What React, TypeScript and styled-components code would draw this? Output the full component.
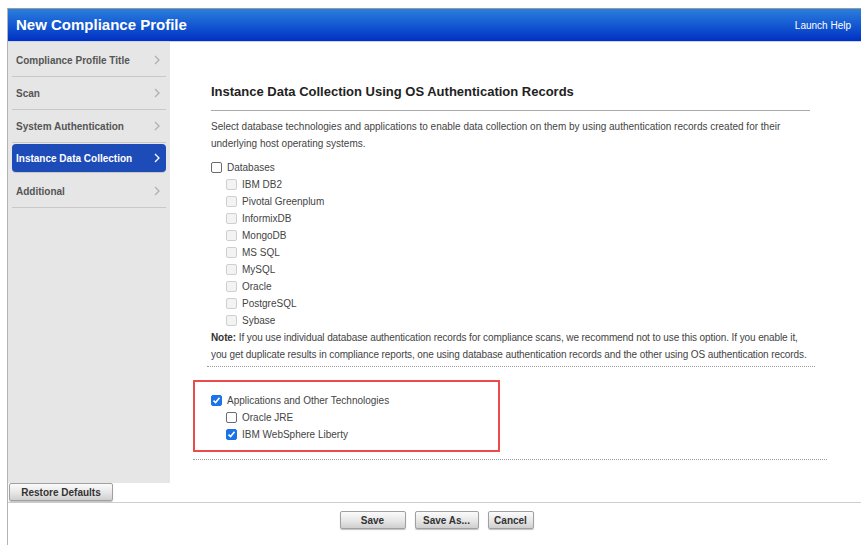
import React from 'react';
import styled, { createGlobalStyle } from 'styled-components';

const GlobalStyle = createGlobalStyle`
  html, body {
    margin: 0;
    padding: 0;
    background: #fff;
    font-family: "Liberation Sans", Arial, sans-serif;
  }
`;

const Frame = styled.div`
  margin: 8px 0 0 7px;
  border-left: 1px solid #b4b4b4;
  border-top: 1px solid #9a9a9a;
  height: 536px;
  display: flex;
  flex-direction: column;
`;

const Header = styled.div`
  height: 32px;
  background: linear-gradient(to bottom, #2c7fdc 0%, #1458d2 50%, #0030c2 100%);
  border-bottom: 1px solid #c9d4ec;
  display: flex;
  align-items: center;
  justify-content: space-between;
  padding: 0 10px 0 8px;
`;

const Title = styled.h1`
  margin: 0 0 2px;
  font-size: 15px;
  font-weight: bold;
  color: #fff;
`;

const HelpLink = styled.a`
  font-size: 10px;
  color: #fff;
  text-decoration: none;
`;

const Body = styled.div`
  display: flex;
  height: 441px;
`;

const Sidebar = styled.nav`
  width: 162px;
  background: #e6e6e6;
  padding: 2px 4px 0;
  box-sizing: border-box;
`;

const NavItem = styled.div<{ $active?: boolean }>`
  height: 32px;
  display: flex;
  align-items: center;
  justify-content: space-between;
  padding: 0 6px 0 4px;
  margin-bottom: 1px;
  box-shadow: 0 1px 0 #c8c8c8;
  font-size: 10px;
  font-weight: bold;
  color: ${(p) => (p.$active ? '#fff' : '#555')};
  background: ${(p) => (p.$active ? '#1d4bb8' : 'transparent')};
  border-radius: ${(p) => (p.$active ? '4px' : '0')};
  ${(p) => p.$active && 'height: 28px; margin: 2px 0 3px;'}
`;

const Main = styled.main`
  flex: 1;
  padding: 0 0 0 23px;
`;

const Content = styled.div`
  width: 599px;
  margin-left: 18px;
`;

const SectionTitle = styled.h2`
  margin: 42px 0 0;
  padding-bottom: 11px;
  font-size: 13px;
  font-weight: bold;
  color: #222;
  border-bottom: 1px solid #aaa;
`;

const Text = styled.p`
  margin: 7px 0 7px;
  font-size: 10px;
  line-height: 17px;
  color: #444;
`;

const NoteText = styled(Text)`
  margin: 0 0 3px;
  width: 604px;
  letter-spacing: -0.1px;
`;

const NoteLabel = styled.strong`
  font-weight: bold;
  color: #333;
`;

const OptionList = styled.div<{ $indent?: number }>`
  padding-left: ${(p) => p.$indent ?? 0}px;
`;

const Option = styled.label`
  display: flex;
  align-items: center;
  height: 17px;
  font-size: 10px;
  color: #444;
`;

const Box = styled.span<{ $checked?: boolean; $disabled?: boolean }>`
  width: 11px;
  height: 11px;
  box-sizing: border-box;
  border-radius: 2px;
  margin-right: 5px;
  display: inline-flex;
  align-items: center;
  justify-content: center;
  border: 1px solid ${(p) => (p.$checked ? '#1a73e8' : p.$disabled ? '#cfcfcf' : '#6b6b6b')};
  background: ${(p) => (p.$checked ? '#1a73e8' : p.$disabled ? '#f3f3f3' : '#fff')};
`;

const Dotted = styled.div<{ $left: number; $width: number }>`
  margin-left: ${(p) => p.$left}px;
  width: ${(p) => p.$width}px;
  border-top: 1px dotted #9a9a9a;
`;

const Highlight = styled.div`
  width: 307px;
  box-sizing: border-box;
  border: 2px solid #ea4c4c;
  margin: 13px 0 7px;
  padding: 10px 0 7px 16px;
`;

const Footer = styled.div`
  height: 19px;
  padding-left: 1px;
  border-bottom: 1px solid #cfcfcf;
  display: flex;
  align-items: flex-start;
`;

const Button = styled.button<{ $w: number }>`
  width: ${(p) => p.$w}px;
  height: 18px;
  padding: 0;
  font-family: "Liberation Sans", Arial, sans-serif;
  font-size: 10px;
  font-weight: bold;
  color: #333;
  border: 1px solid #a0a0a0;
  border-radius: 2px;
  background: linear-gradient(to bottom, #fbfbfb 0%, #e6e6e6 55%, #cfcfcf 100%);
  box-shadow: 0 1px 1px rgba(0, 0, 0, 0.25);
`;

const ActionBar = styled.div`
  display: flex;
  justify-content: center;
  gap: 9px;
  padding: 8px 0 0 4px;
`;

const Chevron = ({ color }: { color: string }) => (
  <svg width="6" height="10" viewBox="0 0 6 10">
    <polyline points="1,1 5,5 1,9" fill="none" stroke={color} strokeWidth="1.3" />
  </svg>
);

const Check = () => (
  <svg width="9" height="9" viewBox="0 0 9 9">
    <polyline points="1.5,4.6 3.6,6.6 7.5,1.8" fill="none" stroke="#fff" strokeWidth="1.6" />
  </svg>
);

const steps = [
  'Compliance Profile Title',
  'Scan',
  'System Authentication',
  'Instance Data Collection',
  'Additional',
];

const databases = [
  'IBM DB2',
  'Pivotal Greenplum',
  'InformixDB',
  'MongoDB',
  'MS SQL',
  'MySQL',
  'Oracle',
  'PostgreSQL',
  'Sybase',
];

export default function App() {
  return (
    <>
      <GlobalStyle />
      <Frame>
        <Header>
          <Title>New Compliance Profile</Title>
          <HelpLink>Launch Help</HelpLink>
        </Header>
        <Body>
          <Sidebar>
            {steps.map((s) => {
              const active = s === 'Instance Data Collection';
              return (
                <NavItem key={s} $active={active}>
                  {s}
                  <Chevron color={active ? '#fff' : '#b0b0b0'} />
                </NavItem>
              );
            })}
          </Sidebar>
          <Main>
            <Content>
              <SectionTitle>Instance Data Collection Using OS Authentication Records</SectionTitle>
              <Text>
                Select database technologies and applications to enable data collection on them by using
                authentication records created for their underlying host operating systems.
              </Text>
              <Option>
                <Box />
                Databases
              </Option>
              <OptionList $indent={15}>
                {databases.map((d) => (
                  <Option key={d}>
                    <Box $disabled />
                    {d}
                  </Option>
                ))}
              </OptionList>
              <NoteText>
                <NoteLabel>Note:</NoteLabel> If you use individual database authentication records for
                compliance scans, we recommend not to use this option. If you enable it, you get duplicate
                results in compliance reports, one using database authentication records and the other using
                OS authentication records.
              </NoteText>
            </Content>
            <Dotted $left={14} $width={608} />
            <Highlight>
              <Option>
                <Box $checked>
                  <Check />
                </Box>
                Applications and Other Technologies
              </Option>
              <OptionList $indent={15}>
                <Option>
                  <Box />
                  Oracle JRE
                </Option>
                <Option>
                  <Box $checked>
                    <Check />
                  </Box>
                  IBM WebSphere Liberty
                </Option>
              </OptionList>
            </Highlight>
            <Dotted $left={0} $width={634} />
          </Main>
        </Body>
        <Footer>
          <Button $w={104}>Restore Defaults</Button>
        </Footer>
        <ActionBar>
          <Button $w={66}>Save</Button>
          <Button $w={64}>Save As...</Button>
          <Button $w={46}>Cancel</Button>
        </ActionBar>
      </Frame>
    </>
  );
}
